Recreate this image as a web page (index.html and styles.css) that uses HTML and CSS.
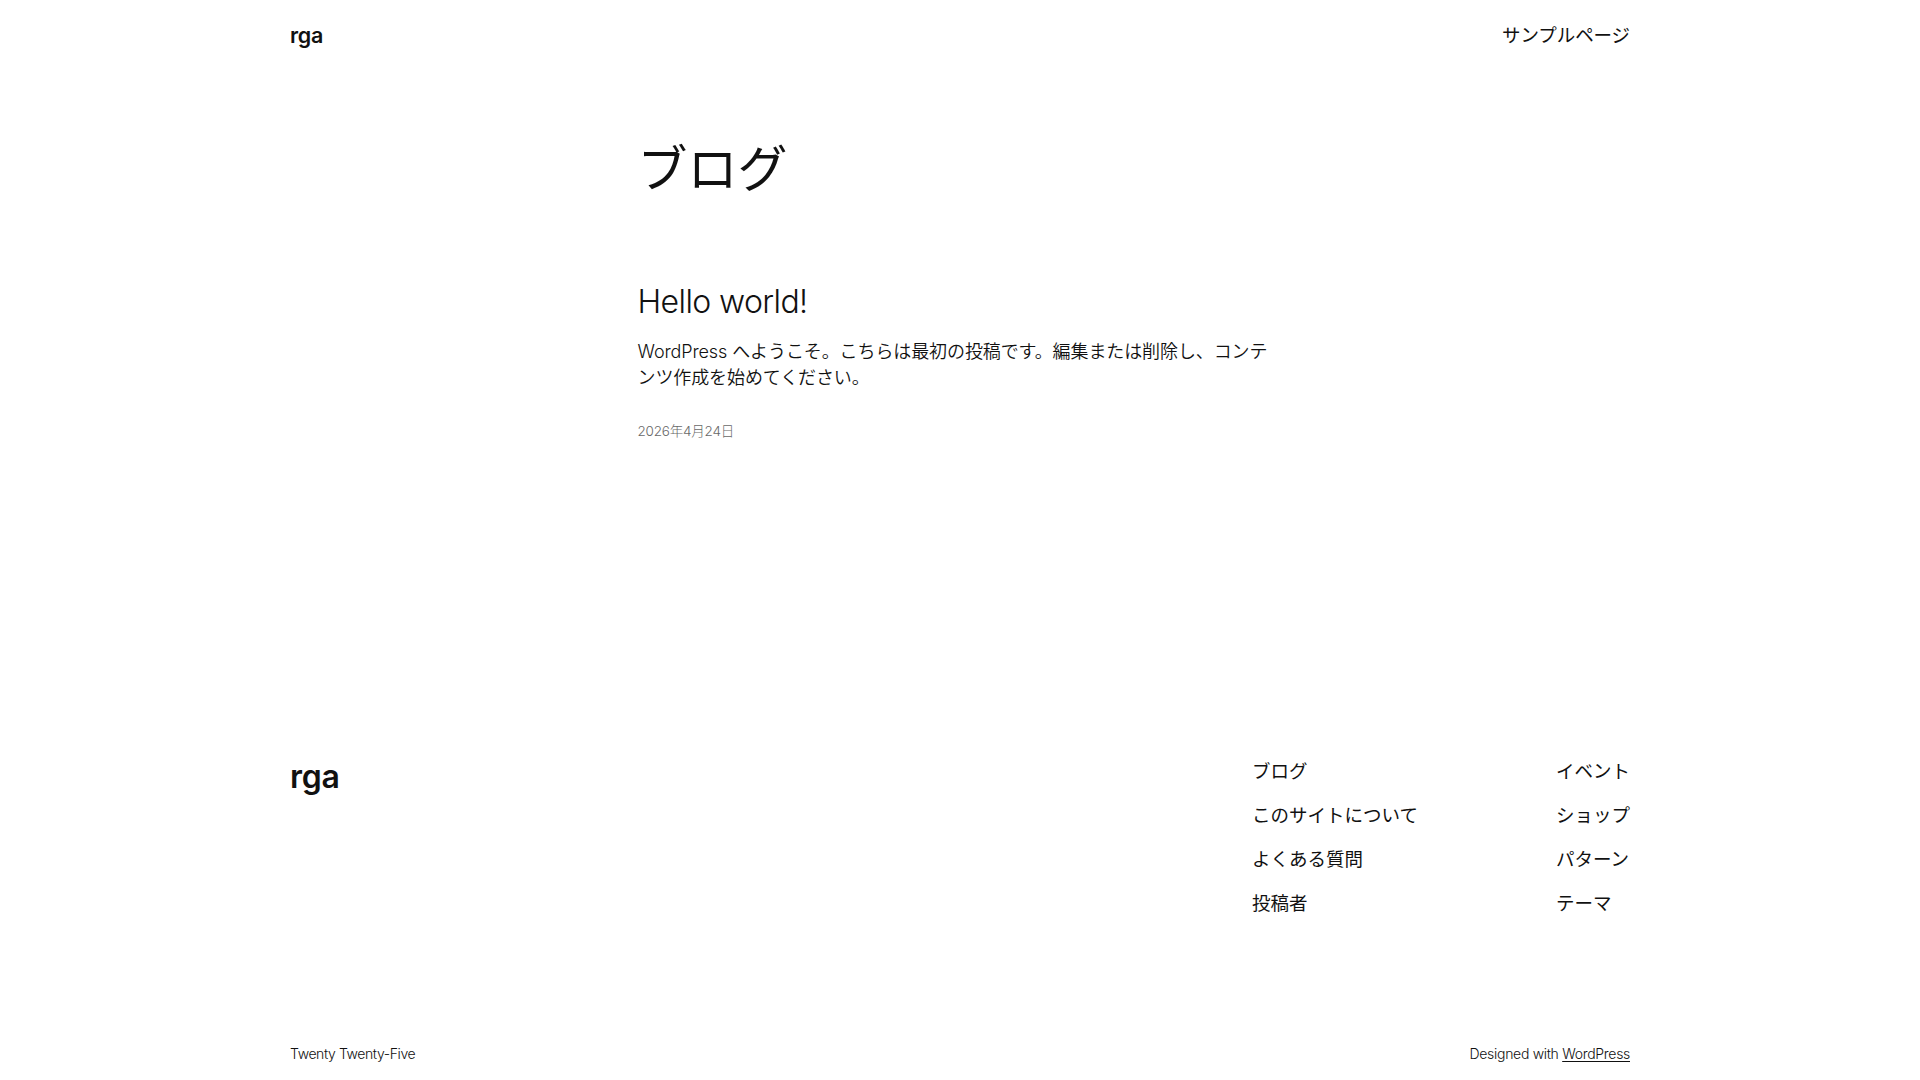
FILE: index.html
```html
<!DOCTYPE html>
<html lang="ja">
<head>
<meta charset="utf-8">
<title>rga</title>
<link rel="stylesheet" href="styles.css">
</head>
<body>
<div class="site">
  <header class="site-header">
    <div class="wide row-between">
      <a class="site-title" href="#">rga</a>
      <nav class="top-nav"><a href="#">サンプルページ</a></nav>
    </div>
  </header>

  <main class="site-main">
    <div class="content">
      <h1 class="page-title">ブログ</h1>
      <article class="post">
        <h2 class="post-title"><a href="#">Hello world!</a></h2>
        <p class="post-excerpt">WordPress へようこそ。こちらは最初の投稿です。編集または削除し、コンテンツ作成を始めてください。</p>
        <div class="post-date">2026年4月24日</div>
      </article>
    </div>
  </main>

  <footer class="site-footer">
    <div class="wide footer-top">
      <a class="footer-title" href="#">rga</a>
      <div class="footer-navs">
        <ul class="footer-nav">
          <li><a href="#">ブログ</a></li>
          <li><a href="#">このサイトについて</a></li>
          <li><a href="#">よくある質問</a></li>
          <li><a href="#">投稿者</a></li>
        </ul>
        <ul class="footer-nav">
          <li><a href="#">イベント</a></li>
          <li><a href="#">ショップ</a></li>
          <li><a href="#">パターン</a></li>
          <li><a href="#">テーマ</a></li>
        </ul>
      </div>
    </div>
    <div class="wide row-between footer-bottom">
      <span class="credit credit-theme">Twenty Twenty-Five</span>
      <span class="credit credit-wp">Designed with <a class="underline" href="#">WordPress</a></span>
    </div>
  </footer>
</div>
</body>
</html>
```

FILE: styles.css
```css
html, body {
  margin: 0;
  padding: 0;
  background: #ffffff;
}

body {
  font-family: "Inter", "Noto Sans CJK JP", sans-serif;
  font-weight: 400;
  font-size: 18px;
  line-height: 1.4;
  letter-spacing: -0.1px;
  color: #111111;
}

a {
  color: inherit;
  text-decoration: none;
}

.wide {
  width: 1340px;
  margin: 0 auto;
}

.row-between {
  display: flex;
  justify-content: space-between;
  align-items: center;
}

/* Header */
.site-header {
  padding: 22px 0;
}

.site-title {
  font-size: 21.5px;
  font-weight: 600;
  line-height: 27px;
  letter-spacing: -0.2px;
}

.top-nav {
  font-size: 18.5px;
  line-height: 27px;
}

/* Main */
.site-main {
  padding-top: 70px;
  padding-bottom: 317px;
}

.content {
  width: 645px;
  margin: 0 auto;
}

.page-title {
  margin: 0;
  font-size: 50px;
  font-weight: 400;
  line-height: 56px;
  letter-spacing: 0;
}

.post {
  margin-top: 86px;
}

.post-title {
  margin: 0;
  font-size: 32px;
  font-weight: 300;
  line-height: 1.2;
  letter-spacing: -0.6px;
}

.post-excerpt {
  margin: 17.5px 0 0;
  font-size: 18px;
  font-weight: 350;
  line-height: 26px;
}

.post-date {
  margin-top: 30px;
  font-size: 13.5px;
  line-height: 21px;
  font-weight: 300;
  letter-spacing: -0.2px;
  color: #686868;
}

/* Footer */
.footer-top {
  display: flex;
  justify-content: space-between;
  align-items: flex-start;
}

.footer-title {
  font-size: 32px;
  font-weight: 600;
  line-height: 36px;
  letter-spacing: -0.3px;
}

.footer-navs {
  display: flex;
  gap: 138px;
}

.footer-nav {
  list-style: none;
  margin: 0;
  padding: 0;
  display: flex;
  flex-direction: column;
  gap: 19px;
  font-size: 18.5px;
  line-height: 25px;
  letter-spacing: 0;
}

.footer-bottom {
  margin-top: 128px;
  padding-bottom: 40px;
}

.credit {
  font-size: 14px;
  line-height: 20px;
  font-weight: 300;
}

.credit-theme {
  letter-spacing: -0.4px;
}

.credit-wp {
  letter-spacing: -0.3px;
}

.underline {
  text-decoration: underline;
  text-underline-offset: 2px;
}
```
